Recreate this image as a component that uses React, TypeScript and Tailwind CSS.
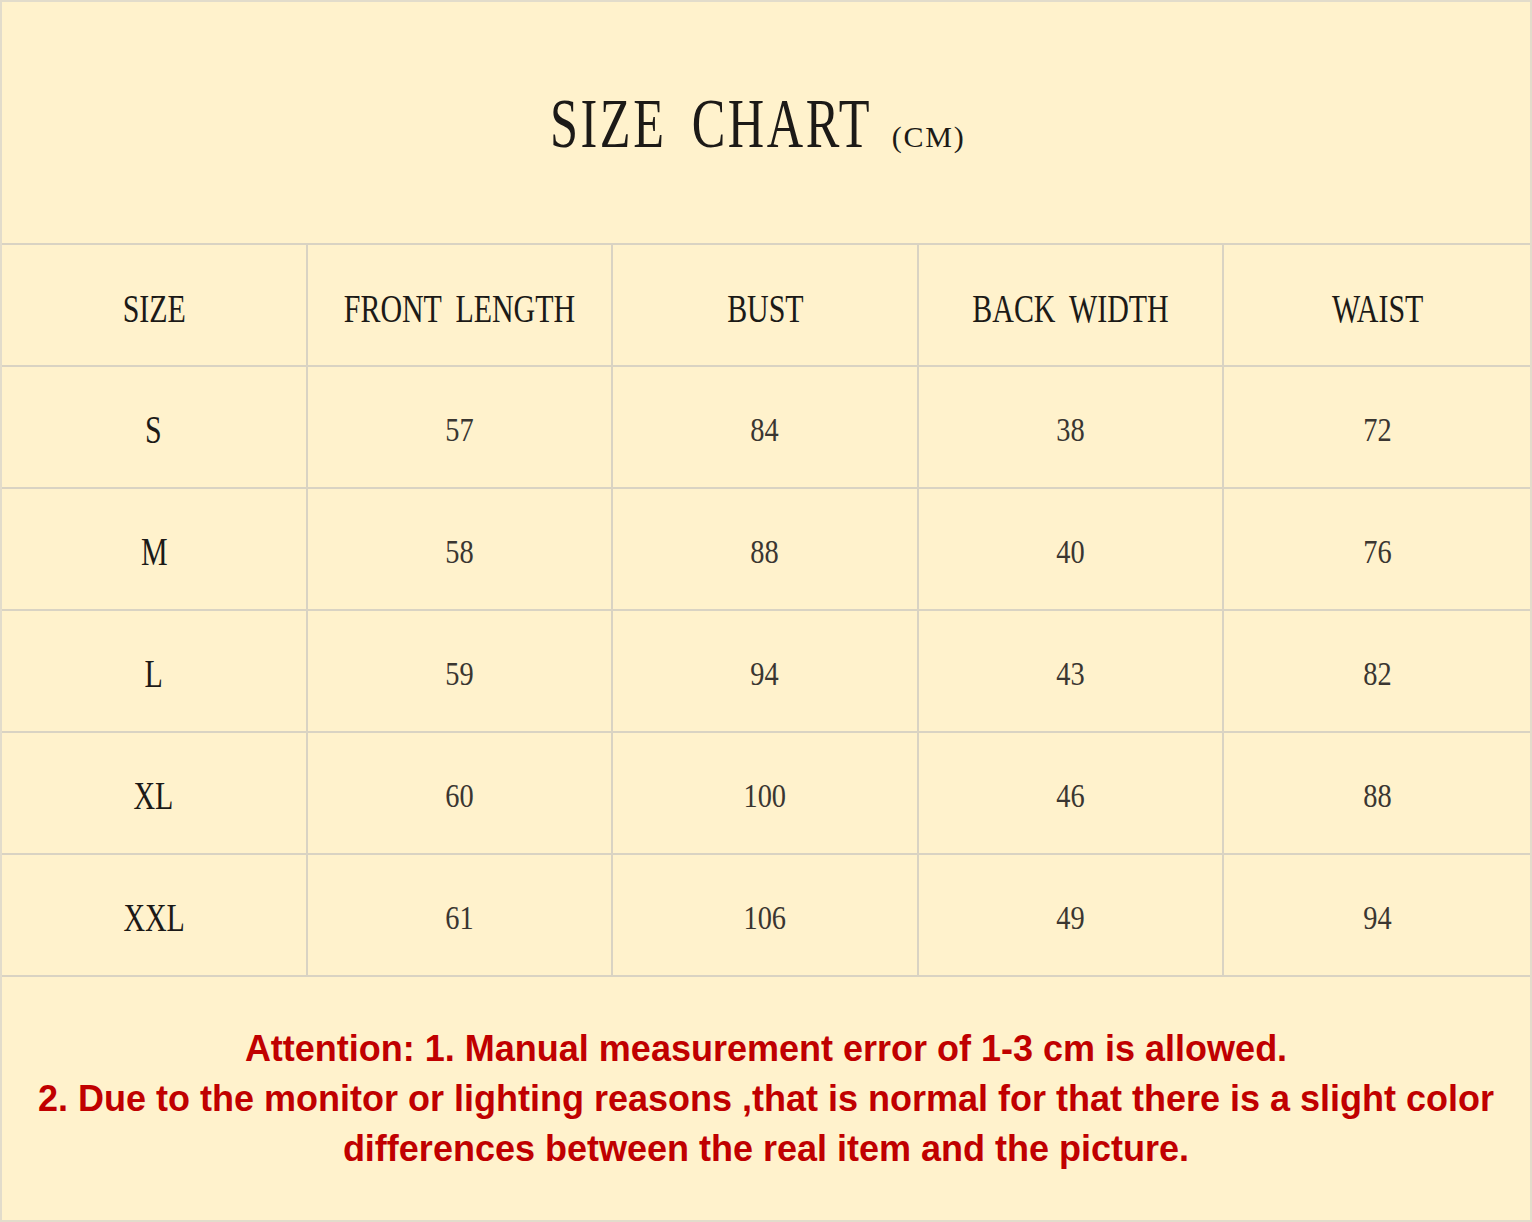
import React from 'react';

const headers = ['SIZE', 'FRONT LENGTH', 'BUST', 'BACK WIDTH', 'WAIST'];

const rows: [string, number, number, number, number][] = [
    ['S', 57, 84, 38, 72],
    ['M', 58, 88, 40, 76],
    ['L', 59, 94, 43, 82],
    ['XL', 60, 100, 46, 88],
    ['XXL', 61, 106, 49, 94],
];

// condensed serif label, like the chinese font used in the original chart
function Label({ text }: { text: string }) {
    return (
        <span className="inline-block whitespace-nowrap scale-x-[0.73] text-[41px] leading-none text-[#1c1a17] [word-spacing:9px]">
            {text}
        </span>
    );
}

function Num({ value }: { value: number }) {
    return (
        <span className="inline-block scale-x-[0.86] text-[33px] leading-none text-[#3a3631]">
            {value}
        </span>
    );
}

export default function App() {
    return (
        <div
            className="w-[1532px] h-[1222px] bg-[#fff2cc] border-2 border-[#e2dccb] flex flex-col"
            style={{ fontFamily: '"Liberation Serif", "Times New Roman", serif' }}
        >
            {/* title */}
            <div className="h-[241px] flex items-center justify-center pr-[16px]">
                <div className="flex items-baseline pt-[2px] whitespace-nowrap">
                    <span className="inline-block origin-left scale-x-[0.72] text-[70px] leading-none tracking-[0.05em] text-[#1c1a17] [word-spacing:14px]">
                        SIZE CHART
                    </span>
                    <span className="inline-block -ml-[106px] text-[30px] leading-none tracking-[0.06em] text-[#1c1a17]">
                        (CM)
                    </span>
                </div>
            </div>

            {/* table */}
            <div className="grid grid-cols-5 border-t-2 border-b-2 border-[#d9d3c3]">
                {headers.map((h, i) => (
                    <div
                        key={h}
                        className={`h-[120px] flex items-center justify-center pt-[6px] ${i < 4 ? 'border-r-2 border-[#d9d3c3]' : ''}`}
                    >
                        <Label text={h} />
                    </div>
                ))}
                {rows.map((r) => (
                    <React.Fragment key={r[0]}>
                        <div className="h-[122px] border-t-2 border-r-2 border-[#d9d3c3] flex items-center justify-center pt-[4px]">
                            <Label text={r[0]} />
                        </div>
                        {r.slice(1).map((v, j) => (
                            <div
                                key={j}
                                className={`h-[122px] border-t-2 border-[#d9d3c3] flex items-center justify-center pt-[6px] ${j < 3 ? 'border-r-2' : ''}`}
                            >
                                <Num value={v as number} />
                            </div>
                        ))}
                    </React.Fragment>
                ))}
            </div>

            {/* notes */}
            <div className="flex-1 flex items-center justify-center">
                <p
                    className="text-center text-[36px] leading-[50px] font-bold text-[#c00000]"
                    style={{ fontFamily: '"Liberation Sans", Arial, sans-serif' }}
                >
                    Attention: 1. Manual measurement error of 1-3 cm is allowed.
                    <br />
                    2. Due to the monitor or lighting reasons ,that is normal for that there is a slight color
                    <br />
                    differences between the real item and the picture.
                </p>
            </div>
        </div>
    );
}
